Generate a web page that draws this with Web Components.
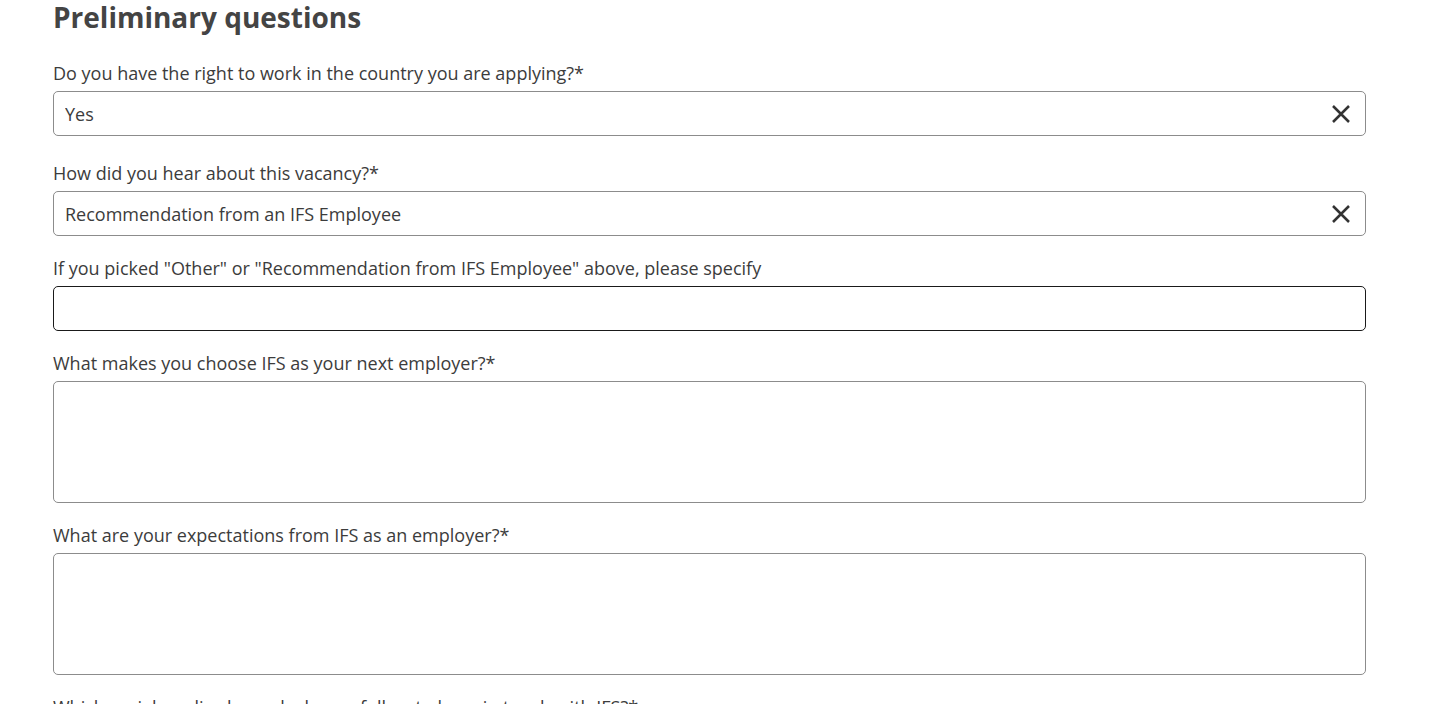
<!DOCTYPE html>
<html lang="en">
<head>
<meta charset="utf-8">
<meta name="viewport" content="width=device-width, initial-scale=1">
<title>Preliminary questions</title>
<style>
  body { margin: 0; background: #fff; color: #3c3c3c; font-family: "Open Sans", sans-serif; font-size: 18px; }
</style>
</head>
<body>
<question-form heading="Preliminary questions">
  <question-field kind="select" spaced label="Do you have the right to work in the country you are applying?*" value="Yes"></question-field>
  <question-field kind="select" label="How did you hear about this vacancy?*" value="Recommendation from an IFS Employee"></question-field>
  <question-field kind="text" active label='If you picked "Other" or "Recommendation from IFS Employee" above, please specify'></question-field>
  <question-field kind="area" label="What makes you choose IFS as your next employer?*"></question-field>
  <question-field kind="area" label="What are your expectations from IFS as an employer?*"></question-field>
  <question-field kind="area" label="Which social media channels do you follow to keep in touch with IFS?*"></question-field>
</question-form>
<script>
class QuestionForm extends HTMLElement {
  constructor() {
    super();
    this.attachShadow({ mode: "open" }).innerHTML = `
      <style>
        :host { display: block; }
        form { display: flex; flex-direction: column; gap: 20px; padding: 0 87px 20px 53px; }
        h2 { margin: 0 0 6px; font-size: 28px; line-height: 35px; font-weight: 700; color: #444; }
      </style>
      <form><h2></h2><slot></slot></form>`;
  }
  connectedCallback() {
    this.shadowRoot.querySelector("h2").textContent = this.getAttribute("heading");
  }
}

class QuestionField extends HTMLElement {
  constructor() {
    super();
    this.attachShadow({ mode: "open" });
  }
  connectedCallback() {
    const controls = {
      select: `<select id="control"><option></option></select>
        <button type="button" aria-label="Clear">
          <svg viewBox="0 0 20 20" width="20" height="20" aria-hidden="true"><path d="M2 2L18 18M18 2L2 18" fill="none" stroke="#333" stroke-width="2.5"/></svg>
        </button>`,
      text: `<input id="control" type="text">`,
      area: `<textarea id="control"></textarea>`
    };
    this.shadowRoot.innerHTML = `
      <style>
        :host { display: flex; flex-direction: column; gap: 5px; --edge: #8c8c8c; }
        :host([spaced]) { margin-bottom: 5px; }
        :host([active]) { --edge: #1a1a1a; }
        label { line-height: 25px; }
        .box { display: flex; align-items: center; box-sizing: border-box; min-height: 45px; border: 1px solid var(--edge); border-radius: 5px; background: #fff; }
        select, input, textarea { flex: 1; min-width: 0; box-sizing: border-box; margin: 0; padding: 0 11px; border: 0; outline: 0; background: none; color: inherit; font: inherit; appearance: none; }
        select, input { height: 43px; }
        textarea { height: 120px; padding: 10px; resize: none; }
        button { display: flex; margin: 0; padding: 10px 14px; border: 0; background: none; cursor: pointer; }
      </style>
      <label for="control"></label>
      <div class="box">${controls[this.getAttribute("kind")]}</div>`;
    this.shadowRoot.querySelector("label").textContent = this.getAttribute("label");
    const option = this.shadowRoot.querySelector("option");
    if (option) {
      option.textContent = this.getAttribute("value");
      const select = this.shadowRoot.querySelector("select");
      this.shadowRoot.querySelector("button").addEventListener("click", () => { select.selectedIndex = -1; });
    }
  }
}

customElements.define("question-form", QuestionForm);
customElements.define("question-field", QuestionField);
</script>
</body>
</html>
